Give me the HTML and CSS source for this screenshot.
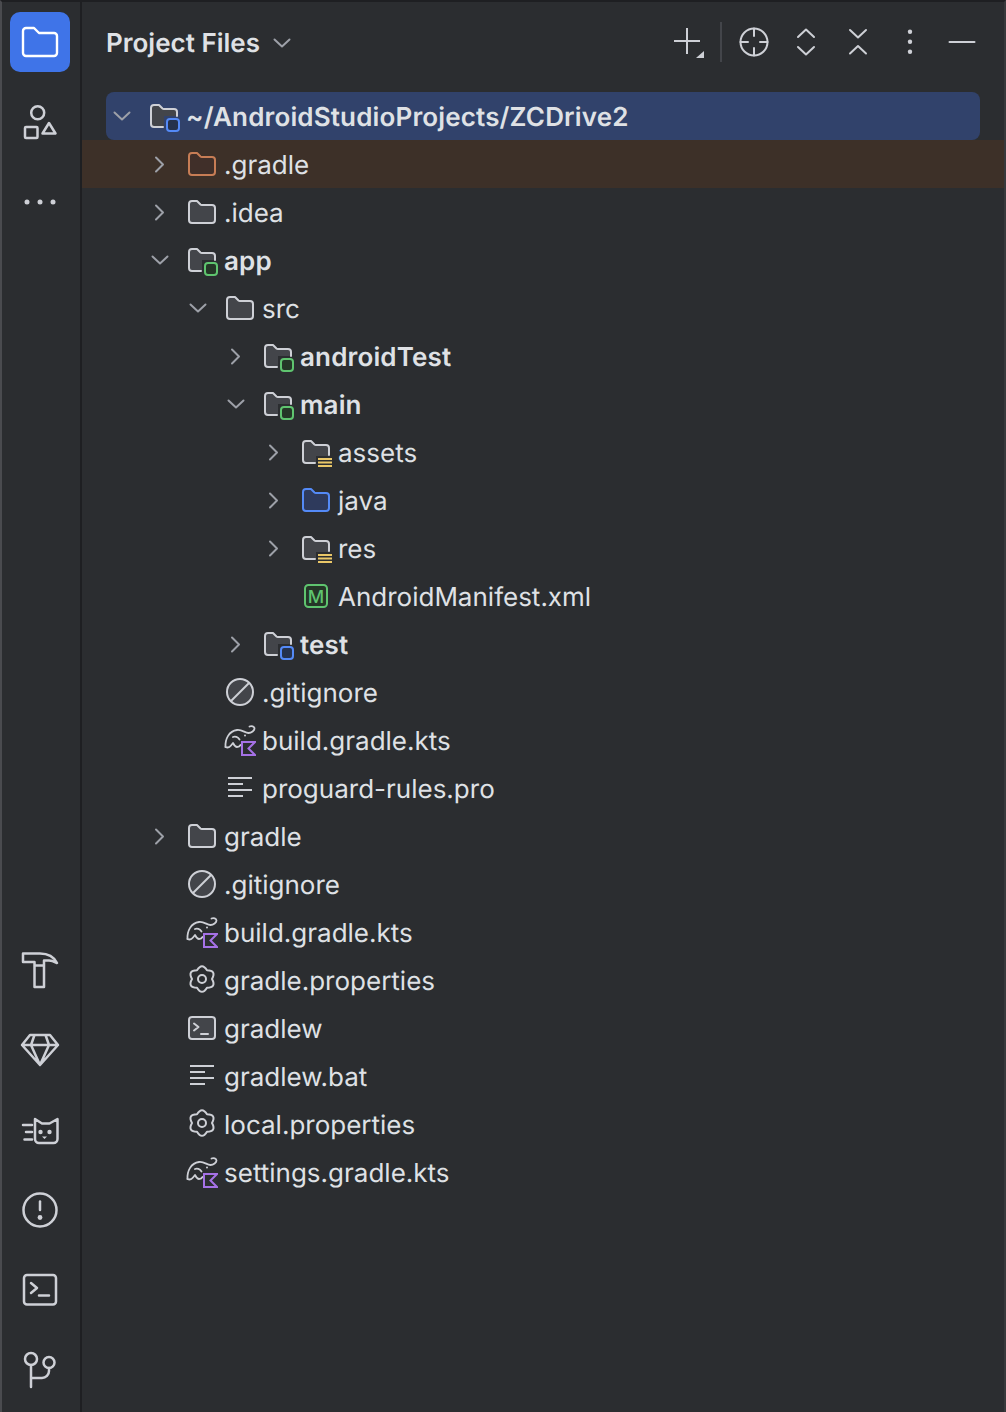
FILE: index.html
```html
<!DOCTYPE html>
<html lang="en">
<head>
<meta charset="utf-8">
<title>Project Files</title>
<link rel="stylesheet" href="styles.css">
</head>
<body>
<svg class="defs" aria-hidden="true">
  <defs>
    <symbol id="chev-r" viewBox="0 0 24 24"><path class="chev" d="M8 5.500l7 7-7 7"/></symbol>
    <symbol id="chev-d" viewBox="0 0 24 24"><path class="chev" d="M4.500 8.500l7.500 7 7.500-7"/></symbol>

    <symbol id="folder" viewBox="0 0 32 32"><path class="ln fg" d="M3 8a3 3 0 0 1 3-3h5l3.500 3.500a2 2 0 0 0 1.500.5h10a3 3 0 0 1 3 3v12a3 3 0 0 1-3 3H6a3 3 0 0 1-3-3z"/></symbol>
    <symbol id="folder-orange" viewBox="0 0 32 32"><path class="ln-o" d="M3 8a3 3 0 0 1 3-3h5l3.500 3.500a2 2 0 0 0 1.500.5h10a3 3 0 0 1 3 3v12a3 3 0 0 1-3 3H6a3 3 0 0 1-3-3z"/></symbol>
    <symbol id="folder-blue" viewBox="0 0 32 32"><path class="ln-b" d="M3 8a3 3 0 0 1 3-3h5l3.500 3.500a2 2 0 0 0 1.500.5h10a3 3 0 0 1 3 3v12a3 3 0 0 1-3 3H6a3 3 0 0 1-3-3z"/></symbol>

    <g id="cut">
      <path class="fg-only" d="M3 8a3 3 0 0 1 3-3h5l3.500 3.500a2 2 0 0 0 1.500.5h10a3 3 0 0 1 3 3v4H16v11H6a3 3 0 0 1-3-3z"/>
      <path class="ln" d="M15 27H6a3 3 0 0 1-3-3V8a3 3 0 0 1 3-3h5l3.500 3.500a2 2 0 0 0 1.500.5h10a3 3 0 0 1 3 3v4"/>
    </g>
    <symbol id="folder-green-b" viewBox="0 0 32 32"><use href="#cut"/><rect class="bd-g" x="19" y="19" width="12" height="12" rx="3"/></symbol>
    <symbol id="folder-blue-b" viewBox="0 0 32 32"><use href="#cut"/><rect class="bd-b" x="19" y="19" width="12" height="12" rx="3"/></symbol>
    <symbol id="folder-res" viewBox="0 0 32 32">
      <path class="fg-only" d="M3 8a3 3 0 0 1 3-3h5l3.500 3.500a2 2 0 0 0 1.500.5h10a3 3 0 0 1 3 3v8H16v7H6a3 3 0 0 1-3-3z"/>
      <path class="ln" d="M15 27H6a3 3 0 0 1-3-3V8a3 3 0 0 1 3-3h5l3.500 3.500a2 2 0 0 0 1.500.5h10a3 3 0 0 1 3 3v7"/>
      <path class="bars" d="M18 23h14M18 26.500h14M18 30h14"/>
    </symbol>

    <symbol id="manifest" viewBox="0 0 32 32">
      <rect class="m-box" x="5" y="5" width="22" height="22" rx="3.500"/>
      <text class="m-txt" x="16" y="22.500" text-anchor="middle">M</text>
    </symbol>
    <symbol id="ignored" viewBox="0 0 32 32"><circle class="ln fg" cx="16" cy="16" r="13"/><path class="ln" d="M7 25L25 7"/></symbol>
    <symbol id="gradle" viewBox="0 0 32 32">
      <path class="ln-t" d="M1.500 23C1 15 5 7 13 6c5-.7 8 3 11.500 3 3 0 6-2.500 6-4.500 0-2-3-3-5-2"/>
      <path class="ln-t" d="M1.500 23c2 1 4 .5 5.500-1.500l2-2.500c1 2 2 4 4 4s3-1 3.500-2"/>
      <path class="ln-t" d="M9 13c2-1 5 0 6.500 2.500"/>
      <circle class="dot" cx="21" cy="11.500" r="1"/>
      <path class="kt" d="M18 18h13l-6.500 6.500L31 31H18z"/>
    </symbol>
    <symbol id="lines" viewBox="0 0 32 32"><path class="ln-sq" d="M4 6h24M4 12h15M4 18h24M4 24h15"/></symbol>
    <symbol id="gear" viewBox="0 0 32 32">
      <path class="ln" d="M11 6.300Q16-2 21 6.300Q30.700 6.500 26 15Q30.700 23.500 21 23.700Q16 32 11 23.700Q1.300 23.500 6 15Q1.300 6.500 11 6.300z"/>
      <circle class="ln" cx="16" cy="15" r="4"/>
    </symbol>
    <symbol id="term-file" viewBox="0 0 32 32">
      <rect class="ln fg" x="3" y="5" width="26" height="22" rx="3"/>
      <path class="ln" d="M8 11.500l4.500 3.500L8 18.500M15 22h7"/>
    </symbol>
  </defs>
</svg>

<div class="window">
  <nav class="rail">
    <div class="rail-group">
      <button class="rail-btn active" aria-label="Project">
        <svg viewBox="0 0 60 60"><path class="ln-w" d="M13 19a3 3 0 0 1 3-3h8l5 5h15a3 3 0 0 1 3 3v17a3 3 0 0 1-3 3H16a3 3 0 0 1-3-3z"/></svg>
      </button>
      <button class="rail-btn" aria-label="Structure">
        <svg viewBox="0 0 60 60"><circle class="ln" cx="27.700" cy="20.700" r="6.500"/><rect class="ln" x="15" y="35" width="12.500" height="11" rx="1"/><path class="ln" d="M39 31l6.500 10.500h-13z"/></svg>
      </button>
      <button class="rail-btn" aria-label="More">
        <svg viewBox="0 0 60 60"><circle class="dot" cx="17" cy="30" r="2.500"/><circle class="dot" cx="30" cy="30" r="2.500"/><circle class="dot" cx="43" cy="30" r="2.500"/></svg>
      </button>
    </div>
    <div class="rail-group">
      <button class="rail-btn" aria-label="Build">
        <svg viewBox="0 0 60 60"><path class="ln" d="M13 13.500h17c8 0 14 3.500 17 9.500-2.500-1.200-5-2.500-8-2.500h-5V47H24.500V22H13zM24.500 25.500H34"/></svg>
      </button>
      <button class="rail-btn" aria-label="Gem">
        <svg viewBox="0 0 60 60"><path class="ln" d="M20 15h20l8 10-18 20-18-20zM12 25h36M24.500 15L21 25l9 20 9-20-3.500-10"/></svg>
      </button>
      <button class="rail-btn" aria-label="Logcat">
        <svg viewBox="0 0 60 60"><path class="ln" d="M25 19l7 4.500h7.500l8-4.500v20a4 4 0 0 1-4 4H29a4 4 0 0 1-4-4zM13 25h9M16 32h6M14.500 39.500H22"/><circle class="dot" cx="30.500" cy="32" r="2.200"/><circle class="dot" cx="39.500" cy="32" r="2.200"/><path class="dot" d="M32 36.500h5l-2.500 2.500z"/></svg>
      </button>
      <button class="rail-btn" aria-label="Problems">
        <svg viewBox="0 0 60 60"><circle class="ln" cx="30" cy="30" r="16.500"/><path class="ln" d="M30 21.500V30"/><circle class="dot" cx="30" cy="37.500" r="2.400"/></svg>
      </button>
      <button class="rail-btn" aria-label="Terminal">
        <svg viewBox="0 0 60 60"><rect class="ln" x="14" y="15" width="32" height="29.500" rx="3"/><path class="ln" d="M21 23l6 5-6 5M29 35.500h10"/></svg>
      </button>
      <button class="rail-btn" aria-label="Git">
        <svg viewBox="0 0 60 60"><circle class="ln" cx="21" cy="19" r="6"/><circle class="ln" cx="39" cy="22.500" r="5.500"/><path class="ln" d="M21 25v22M39 28v3a7 7 0 0 1-7 7H21"/></svg>
      </button>
    </div>
  </nav>

  <main class="panel">
    <header class="head">
      <div class="title">
        <span class="label">Project Files</span>
        <svg class="title-chev" viewBox="0 0 24 24"><use href="#chev-d"/></svg>
      </div>
      <div class="tools">
        <button class="tool" aria-label="New">
          <svg viewBox="0 0 52 52"><path class="ln-thin" d="M25 12v26M12 25h26"/><path class="dot" d="M42 35v7h-8z"/></svg>
        </button>
        <span class="sep"></span>
        <button class="tool" aria-label="Locate">
          <svg viewBox="0 0 52 52"><circle class="ln" cx="26" cy="26" r="13.500"/><path class="ln" d="M26 12.500v7.500M26 32v7.500M12.500 26h7.500M32 26h7.500"/></svg>
        </button>
        <button class="tool" aria-label="Expand all">
          <svg viewBox="0 0 52 52"><path class="ln" d="M18 21l8-7.500 8 7.500M18 31l8 7.500 8-7.500"/></svg>
        </button>
        <button class="tool" aria-label="Collapse all">
          <svg viewBox="0 0 52 52"><path class="ln" d="M18 14l8 7.500 8-7.500M18 37.500l8-7.500 8 7.500"/></svg>
        </button>
        <button class="tool" aria-label="Options">
          <svg viewBox="0 0 52 52"><circle class="dot" cx="26" cy="15.700" r="2.200"/><circle class="dot" cx="26" cy="25.700" r="2.200"/><circle class="dot" cx="26" cy="35.700" r="2.200"/></svg>
        </button>
        <button class="tool" aria-label="Hide">
          <svg viewBox="0 0 52 52"><path class="ln" d="M13.500 26h25"/></svg>
        </button>
      </div>
    </header>

    <div class="tree">
      <div class="row d0 selected bold"><svg class="chev-ic"><use href="#chev-d"/></svg><svg class="ic"><use href="#folder-blue-b"/></svg><span class="label">~/AndroidStudioProjects/ZCDrive2</span></div>
      <div class="row d1 excluded"><svg class="chev-ic"><use href="#chev-r"/></svg><svg class="ic"><use href="#folder-orange"/></svg><span class="label">.gradle</span></div>
      <div class="row d1"><svg class="chev-ic"><use href="#chev-r"/></svg><svg class="ic"><use href="#folder"/></svg><span class="label">.idea</span></div>
      <div class="row d1 bold"><svg class="chev-ic"><use href="#chev-d"/></svg><svg class="ic"><use href="#folder-green-b"/></svg><span class="label">app</span></div>
      <div class="row d2"><svg class="chev-ic"><use href="#chev-d"/></svg><svg class="ic"><use href="#folder"/></svg><span class="label">src</span></div>
      <div class="row d3 bold"><svg class="chev-ic"><use href="#chev-r"/></svg><svg class="ic"><use href="#folder-green-b"/></svg><span class="label">androidTest</span></div>
      <div class="row d3 bold"><svg class="chev-ic"><use href="#chev-d"/></svg><svg class="ic"><use href="#folder-green-b"/></svg><span class="label">main</span></div>
      <div class="row d4"><svg class="chev-ic"><use href="#chev-r"/></svg><svg class="ic"><use href="#folder-res"/></svg><span class="label">assets</span></div>
      <div class="row d4"><svg class="chev-ic"><use href="#chev-r"/></svg><svg class="ic"><use href="#folder-blue"/></svg><span class="label">java</span></div>
      <div class="row d4"><svg class="chev-ic"><use href="#chev-r"/></svg><svg class="ic"><use href="#folder-res"/></svg><span class="label">res</span></div>
      <div class="row d4"><span class="chev-ic"></span><svg class="ic"><use href="#manifest"/></svg><span class="label">AndroidManifest.xml</span></div>
      <div class="row d3 bold"><svg class="chev-ic"><use href="#chev-r"/></svg><svg class="ic"><use href="#folder-blue-b"/></svg><span class="label">test</span></div>
      <div class="row d2"><span class="chev-ic"></span><svg class="ic"><use href="#ignored"/></svg><span class="label">.gitignore</span></div>
      <div class="row d2"><span class="chev-ic"></span><svg class="ic"><use href="#gradle"/></svg><span class="label">build.gradle.kts</span></div>
      <div class="row d2"><span class="chev-ic"></span><svg class="ic"><use href="#lines"/></svg><span class="label">proguard-rules.pro</span></div>
      <div class="row d1"><svg class="chev-ic"><use href="#chev-r"/></svg><svg class="ic"><use href="#folder"/></svg><span class="label">gradle</span></div>
      <div class="row d1"><span class="chev-ic"></span><svg class="ic"><use href="#ignored"/></svg><span class="label">.gitignore</span></div>
      <div class="row d1"><span class="chev-ic"></span><svg class="ic"><use href="#gradle"/></svg><span class="label">build.gradle.kts</span></div>
      <div class="row d1"><span class="chev-ic"></span><svg class="ic"><use href="#gear"/></svg><span class="label">gradle.properties</span></div>
      <div class="row d1"><span class="chev-ic"></span><svg class="ic"><use href="#term-file"/></svg><span class="label">gradlew</span></div>
      <div class="row d1"><span class="chev-ic"></span><svg class="ic"><use href="#lines"/></svg><span class="label">gradlew.bat</span></div>
      <div class="row d1"><span class="chev-ic"></span><svg class="ic"><use href="#gear"/></svg><span class="label">local.properties</span></div>
      <div class="row d1"><span class="chev-ic"></span><svg class="ic"><use href="#gradle"/></svg><span class="label">settings.gradle.kts</span></div>
    </div>
  </main>
</div>
</body>
</html>
```

FILE: styles.css
```css
* { box-sizing: border-box; }
html, body { margin: 0; height: 100%; background: #2b2d30; }
body { font-family: Inter, "Noto Sans", sans-serif; color: #dfe1e5; overflow: hidden; text-rendering: geometricPrecision; }

.defs { position: absolute; width: 0; height: 0; }

.window {
  display: flex;
  height: 1412px;
  border-top: 2px solid #1e1f22;
  border-left: 2px solid #4a4b4f;
  border-right: 2px solid #38393c;
  background: #2b2d30;
}

.rail {
  flex: 0 0 80px;
  display: flex;
  flex-direction: column;
  justify-content: space-between;
  padding: 10px 0 12px;
  border-right: 2px solid #1e1f22;
}
.rail-group { display: flex; flex-direction: column; gap: 20px; padding-left: 8px; }
.rail-btn, .tool { padding: 0; border: 0; background: none; display: block; }
.rail-btn { width: 60px; height: 60px; border-radius: 10px; }
.rail-btn svg { display: block; width: 60px; height: 60px; }
.rail-btn .ln { stroke-width: 2.5; }
.rail-btn.active { background: #3f74e8; }

.panel { flex: 1; min-width: 0; }

.head {
  height: 80px;
  display: flex;
  align-items: center;
  justify-content: space-between;
  padding: 0 16px 0 24px;
}
.title { display: flex; align-items: center; gap: 10px; font-size: 26px; font-weight: 600; color: #dfe1e5; }
.title-chev { width: 24px; height: 24px; margin-top: 2px; }
.tools { display: flex; align-items: center; }
.tool { width: 52px; height: 52px; }
.tool svg { display: block; width: 52px; height: 52px; }
.sep { width: 2px; height: 40px; margin: 0 6px; background: #43454a; }

.tree { padding-top: 10px; }
.row {
  height: 48px;
  display: flex;
  align-items: center;
  font-size: 26px;
  line-height: 48px;
  white-space: nowrap;
}
.label { margin-top: 3px; }
.row.bold { font-weight: 600; letter-spacing: .15px; }
.row.d0 { padding-left: 28px; }
.row.d1 { padding-left: 66px; }
.row.d2 { padding-left: 104px; }
.row.d3 { padding-left: 142px; }
.row.d4 { padding-left: 180px; }
.row.selected { margin: 0 24px; padding-left: 4px; background: #31426b; border-radius: 8px; }
.row.excluded { background: #3d3028; }

.chev-ic { display: block; flex: 0 0 24px; width: 24px; height: 24px; margin-right: 14px; }
.ic { flex: 0 0 32px; width: 32px; height: 32px; margin-right: 6px; }

.chev { fill: none; stroke: #9da0a8; stroke-width: 2; stroke-linecap: round; stroke-linejoin: round; }
.ln { fill: none; stroke: #ced0d6; stroke-width: 2; stroke-linecap: round; stroke-linejoin: round; }
.ln.fg { fill: #43454a; }
.fg-only { fill: #43454a; }
.ln-t { fill: none; stroke: #ced0d6; stroke-width: 1.8; stroke-linecap: round; stroke-linejoin: round; }
.ln-thin { fill: none; stroke: #ced0d6; stroke-width: 2; }
.ln-sq { fill: none; stroke: #ced0d6; stroke-width: 2; }
.ln-w { fill: none; stroke: #ffffff; stroke-width: 2.4; stroke-linejoin: round; }
.ln-o { fill: #402f29; stroke: #c77d55; stroke-width: 2; stroke-linejoin: round; }
.ln-b { fill: #2e3a5c; stroke: #548af7; stroke-width: 2; stroke-linejoin: round; }
.dot { fill: #ced0d6; }
.bd-g { fill: #253627; stroke: #5fc46f; stroke-width: 2; }
.bd-b { fill: #25324d; stroke: #548af7; stroke-width: 2; }
.bars { fill: none; stroke: #eac768; stroke-width: 2; }
.kt { fill: none; stroke: #a571e6; stroke-width: 2; stroke-linejoin: miter; }
.m-box { fill: #253627; stroke: #5fc46f; stroke-width: 2; }
.m-txt { fill: #5fc46f; font-family: Inter, sans-serif; font-size: 18px; font-weight: 500; }
```
